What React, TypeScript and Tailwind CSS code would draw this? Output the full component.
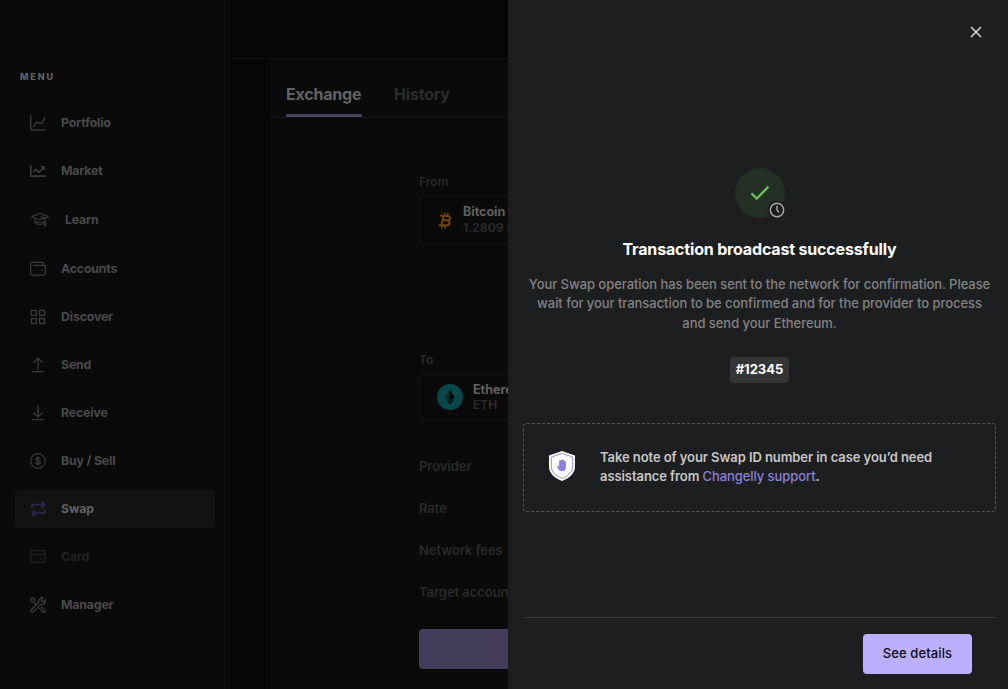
import React from "react";

type IconProps = { children: React.ReactNode; size?: number; sw?: number };

const Icon = ({ children, size = 16, sw = 1.3 }: IconProps) => (
  <svg
    width={size}
    height={size}
    viewBox="0 0 16 16"
    fill="none"
    stroke="currentColor"
    strokeWidth={sw}
    strokeLinecap="round"
    strokeLinejoin="round"
    className="shrink-0"
  >
    {children}
  </svg>
);

const menu = [
  {
    label: "Portfolio",
    icon: (
      <Icon>
        <path d="M.8.6v12.6c0 1.2.7 2 1.9 2h12.4" />
        <path d="M3.7 11.6l2-3.6c.2-.4.6-.5 1-.5l4.5 1c.5.1.9-.1 1.1-.6l2.6-5.1" />
      </Icon>
    ),
  },
  {
    label: "Market",
    icon: (
      <svg width="16" height="16" viewBox="0 0 16 16" fill="none" stroke="currentColor" strokeWidth="1.700" className="shrink-0">
        <path d="M.8 2.2v10.900H16" />
        <path d="M3.300 9l2.600-2.600 3 3L13.400 5" />
        <path d="M10.200 2.900h4.700v4.700z" fill="currentColor" stroke="none" />
      </svg>
    ),
  },
  {
    label: "Learn",
    icon: (
      <svg width="20" height="16" viewBox="0 0 20 16" fill="none" stroke="currentColor" strokeWidth="1.100" strokeLinejoin="round" className="shrink-0">
        <path d="M1.400 4.700L10 1.600l8.600 3.100L10 7.800z" />
        <path d="M4.800 6.200v4.200c1.100 1.300 3 2.100 5.200 2.100 2 0 3.600-.6 4.800-1.600" />
        <path d="M10 4.700l5 1.600v4.800" />
        <path d="M4.800 8.600c1.500 1.300 3.200 1.900 5.200 1.900s3.300-.5 4.500-1.400" />
        <circle cx="15" cy="12" r="1" />
        <path d="M15 13v1.900" />
      </svg>
    ),
  },
  {
    label: "Accounts",
    icon: (
      <Icon sw={1.2}>
        <path d="M3.200 4.300h10.300c1.200 0 1.900.7 1.900 1.800v6.200c0 1.200-.7 1.900-1.900 1.900H2.500C1.300 14.200.6 13.500.6 12.300V3.100C.6 2 1.300 1.300 2.500 1.300H12c1 0 1.700.7 1.700 1.700v1.300" />
        <path d="M11.200 9h1.500" strokeWidth="1.700" strokeLinecap="butt" />
      </Icon>
    ),
  },
  {
    label: "Discover",
    icon: (
      <Icon sw={1.3}>
        <rect x="1.400" y="1.400" width="5" height="5" />
        <rect x="9.500" y="1.400" width="5" height="5" />
        <rect x="1.400" y="9.500" width="5" height="5" />
        <rect x="9.500" y="9.500" width="5" height="5" />
      </Icon>
    ),
  },
  {
    label: "Send",
    icon: (
      <Icon>
        <path d="M8 12.300V1.200M3.800 5.200L8 1.100l4.200 4.100M2.500 14.600h11" />
      </Icon>
    ),
  },
  {
    label: "Receive",
    icon: (
      <Icon>
        <path d="M8 .8v11.100M3.800 7.800L8 11.900l4.200-4.100M2.500 14.600h11" />
      </Icon>
    ),
  },
  {
    label: "Buy / Sell",
    icon: (
      <Icon sw={1.2}>
        <circle cx="8" cy="8" r="7.300" />
        <path d="M8 3.700v8.600M10.300 6.100C10 5.200 9.200 4.800 8 4.800c-1.400 0-2.300.6-2.300 1.500 0 2.300 4.700 1 4.700 3.300 0 1-.9 1.600-2.400 1.600-1.300 0-2.200-.5-2.500-1.500" />
      </Icon>
    ),
  },
  {
    label: "Swap",
    icon: (
      <Icon sw={1.7}>
        <path d="M2 7V4.900c0-.8.4-1.200 1.200-1.200h11.300M12.300 1.100l2.600 2.600-2.600 2.600M15 8.800V11c0 .8-.4 1.200-1.200 1.200H2.300M4.600 9.600L2 12.200l2.600 2.600" />
      </Icon>
    ),
  },
  {
    label: "Card",
    icon: (
      <Icon>
        <rect x=".7" y="1.600" width="14.600" height="11.600" rx=".6" />
        <path d="M.7 5.500h14.600M10.400 9.900h1.600" />
      </Icon>
    ),
  },
  {
    label: "Manager",
    icon: (
      <Icon sw={1.3}>
        <path d="M8.700 5.200c-.5-2.500 1.500-4.900 4.400-4.500L11.200 2.600l.4 1.800 1.900.4 1.800-1.900c.4 2.900-1.900 5-4.500 4.500L3.300 14.800c-.6.6-1.400.6-2 0s-.6-1.500 0-2.100z" />
        <path d="M3.500 4.900L6 7M3.500 4.900L1.900 4.500.7 2.400 2.300.8l2.100 1.100.5 1.600M9.700 11.400l3.200 3.600c.6.6 1.300.5 1.900 0 .6-.6.6-1.300 0-1.900l-3.300-3.200" />
      </Icon>
    ),
  },
];

function itemTone(label: string) {
  if (label === "Swap") return "bg-[#121212] text-[#606060]";
  if (label === "Card") return "text-[#222222]";
  return "text-[#494949]";
}

function iconTone(label: string) {
  if (label === "Swap") return "text-[#2c2747]";
  if (label === "Card") return "text-[#202020]";
  return "text-[#3b3b3b]";
}

function Sidebar() {
  return (
    <aside className="w-[230px] shrink-0 bg-[#0a0a0a] px-[15px]">
      <div className="mt-[70px] pl-[5px] text-[9px] leading-[14px] font-extrabold tracking-[1.85px] text-[#626262]">MENU</div>
      <nav className="mt-5 flex flex-col gap-2.5">
        {menu.map((m) => (
          <div
            key={m.label}
            className={`flex items-center gap-[15px] rounded-[3px] pl-[15px] text-[12.3px] font-bold tracking-[-0.15px] ${
              m.label === "Learn" ? "h-10" : "h-[38px]"
            } ${itemTone(m.label)}`}
          >
            <span className={iconTone(m.label)}>{m.icon}</span>
            <span className="leading-4">{m.label}</span>
          </div>
        ))}
      </nav>
    </aside>
  );
}

function Main() {
  return (
    <main className="flex w-[278px] shrink-0 flex-col overflow-hidden bg-[#060606] whitespace-nowrap">
      <div className="ml-0.5 h-[59px] shrink-0 border-b border-[#101211]" />
      <div className="ml-10 grow bg-[#0a0a0a] pt-[3px]">
        <div className="flex h-14 gap-8 border-b border-[#121312] pl-4 text-[16px] font-bold tracking-[-0.2px]">
          <div className="h-[55px] w-[76px] border-b-[3px] border-[#48405f] pt-[20px] leading-6 text-[#626262]">Exchange</div>
          <div className="pt-[20px] leading-6 text-[#2c2c2c]">History</div>
        </div>
        <div className="ml-[149px] text-[12px] font-semibold text-[#292929]">
          <div className="mt-14 h-4 leading-4">From</div>
          <div className="mt-[6px] flex h-12 w-[250px] items-center rounded-[4px] border border-[#121313] pl-[18px]">
            <svg width="14" height="17" viewBox="0 0 14 17" fill="none" stroke="#6f4411" strokeWidth="2" strokeLinejoin="round">
              <path d="M1.800 3.400l2 .5h5.700c3.600 0 3.200 4.400-.5 4.400H5.100h3.800c4 0 3.400 5-.6 5H.8M5.500 3.900L3.500 13.300" />
              <path d="M7 .6L6.300 3.600M10.100.8l-.7 3M4.300 13.300l-.7 3.100M7.500 13.300l-.7 3.100" strokeWidth="1.500" />
            </svg>
            <div className="ml-[11px] leading-4">
              <div className="-mt-px text-[12.6px] font-bold tracking-[-0.05px] text-[#606060]">Bitcoin</div>
              <div className="text-[12.3px] text-[#2c2c2c]">1.2809 BTC</div>
            </div>
          </div>
          <div className="mt-[108px] h-4 leading-4">To</div>
          <div className="mt-[6px] flex h-[47px] w-[250px] items-center rounded-[4px] border border-[#121313] pb-px pl-[17px]">
            <svg width="26" height="26" viewBox="0 0 26 26">
              <circle cx="13" cy="13" r="13" fill="#08484b" />
              <path d="M13 5.500l4.600 7.700L13 16l-4.600-2.800z" fill="#071013" />
              <path d="M13 10.800l4.600 2.400L13 16z" fill="#020606" />
              <path d="M13 10.800l-4.600 2.400L13 16z" fill="#0a2022" />
              <path d="M8.500 14.200L13 17l4.500-2.800L13 20.700z" fill="#041012" />
              <path d="M12.500 7v8.600l-3.500-2.200z" fill="#0a2d2f" />
            </svg>
            <div className="ml-[10px] leading-[15px]">
              <div className="text-[12.6px] font-bold tracking-[-0.05px] text-[#606060]">Ethereum</div>
              <div className="text-[12px] text-[#2c2c2c]">ETH</div>
            </div>
          </div>
          <div className="mt-[37px] flex flex-col gap-[26px] text-[13px] leading-4 tracking-[-0.05px]">
            <div>Provider</div>
            <div>Rate</div>
            <div>Network fees</div>
            <div>Target account</div>
          </div>
          <div className="mt-[29px] h-10 w-[250px] rounded-[4px] bg-[#443c5b]" />
        </div>
      </div>
    </main>
  );
}

function Drawer() {
  return (
    <section className="flex w-[500px] shrink-0 flex-col bg-[#1d1e20] pr-3 pl-[15px]">
      <div className="flex h-16 items-center justify-end pr-[14px] text-[#d5d5d5]">
        <svg width="12" height="12" viewBox="0 0 12 12" fill="none" stroke="currentColor" strokeWidth="1.600">
          <path d="M1 1l10 10M11 1L1 11" />
        </svg>
      </div>
      <div className="mt-[104px] flex flex-col items-center text-center">
        <svg width="50" height="50" viewBox="0 0 50 50" overflow="visible">
          <circle cx="25" cy="25" r="25" fill="#243026" />
          <path d="M16.500 25.400l5.200 5.200L33.400 18.700" fill="none" stroke="#66be54" strokeWidth="2.400" />
          <circle cx="42" cy="42" r="9.500" fill="#1d1e20" />
          <circle cx="42" cy="42" r="6.700" fill="none" stroke="#aaaaaa" strokeWidth="1.400" />
          <path d="M42 37.800V42l2.200 2.400" fill="none" stroke="#aaaaaa" strokeWidth="1.400" />
        </svg>
        <h1 className="mt-[19px] text-[16px] leading-6 font-bold tracking-[-0.17px] text-white">Transaction broadcast successfully</h1>
        <p className="mt-[13.5px] text-[13px] leading-[19.5px] font-medium tracking-[-0.055px] whitespace-nowrap text-[#828282]">
          Your Swap operation has been sent to the network for confirmation. Please
          <br />
          wait for your transaction to be confirmed and for the provider to process
          <br />
          and send your Ethereum.
        </p>
        <div className="mt-6 flex h-[26px] w-[59px] items-center justify-center rounded-[4px] bg-[#343536] text-[13px] font-bold text-white">
          #12345
        </div>
      </div>
      <div className="mt-10 flex h-[89px] shrink-0 items-center rounded-[4px] border border-dashed border-[#56575a] pl-6">
        <svg width="28" height="32" viewBox="0 0 28 32" className="-mt-1">
          <path d="M14 1l13 4.500v11.200c0 6.600-5.500 11.200-13 14.300C6.500 27.900 1 23.300 1 16.700V5.500z" fill="#fff" />
          <path d="M14 3.400l10.700 3.700v9.600c0 5.300-4.500 9.100-10.700 11.900C7.800 25.800 3.300 22 3.300 16.700V7.100z" fill="none" stroke="#8b80db" strokeWidth=".9" />
          <path
            d="M11.100 16.800V11.200a.85.85 0 0 1 1.700 0v-1.100a.85.85 0 0 1 1.700 0v.5a.85.85 0 0 1 1.700 0v1.300a.85.85 0 0 1 1.700 0v5.200c0 2.900-1.500 4.200-3.900 4.200-2.300 0-3.500-1.400-4.900-4.200-.5-1.100.9-1.500 2-.3z"
            fill="#8b80db"
          />
        </svg>
        <p className="-mt-px ml-[24px] text-[13px] leading-[19.5px] font-semibold tracking-[-0.075px] text-[#c7c7c7]">
          Take note of your Swap ID number in case you’d need
          <br />
          assistance from <span className="font-medium text-[#8b80db]">Changelly support</span>.
        </p>
      </div>
      <footer className="mt-[105px] flex justify-end border-t border-[#37383a] pt-4 pr-6">
        <button className="h-10 w-[109px] rounded-[4px] bg-[#bbb0ff] text-[13px] font-medium tracking-[0.1px] text-[#0c0c12]">See details</button>
      </footer>
    </section>
  );
}

export default function App() {
  return (
    <div className="flex h-[689px] w-[1008px] overflow-hidden bg-[#060606] font-['Inter',sans-serif]">
      <Sidebar />
      <Main />
      <Drawer />
    </div>
  );
}
